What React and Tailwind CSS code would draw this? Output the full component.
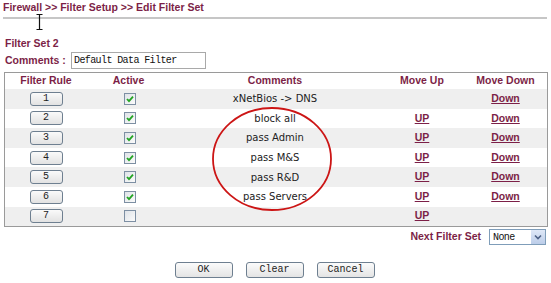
import React from "react";

const maroon = "text-[#7c1f47]";

function RuleBtn({ n }) {
  return (
    <div className="w-[33px] h-[14px] rounded-[3px] border border-[#6e7f90] bg-gradient-to-b from-[#fafafa] to-[#e2e2e2] flex items-center justify-center font-['Liberation_Mono'] text-[10px] text-[#222] leading-none">
      {n}
    </div>
  );
}

function Check({ on }) {
  return (
    <div className="w-[12px] h-[12px] border border-[#7d8fa3] bg-gradient-to-br from-[#dfe3e8] to-[#fbfbfb] flex items-center justify-center">
      {on && (
        <svg width="8" height="8" viewBox="0 0 8 8">
          <path d="M1 4 L3 6.2 L7 1.6" fill="none" stroke="#23a423" strokeWidth="1.8" />
        </svg>
      )}
    </div>
  );
}

function PageBtn({ children }) {
  return (
    <div className="w-[58px] h-[16px] rounded-[3px] border border-[#6e7f90] bg-gradient-to-b from-[#fbfbfb] to-[#e4e4e4] flex items-center justify-center font-['Liberation_Mono'] text-[10px] text-[#222] leading-none">
      {children}
    </div>
  );
}

const rows = [
  { n: 1, on: true, c: "xNetBios -> DNS", up: false, down: true },
  { n: 2, on: true, c: "block all", up: true, down: true },
  { n: 3, on: true, c: "pass Admin", up: true, down: true },
  { n: 4, on: true, c: "pass M&S", up: true, down: true },
  { n: 5, on: true, c: "pass R&D", up: true, down: true },
  { n: 6, on: true, c: "pass Servers", up: true, down: true },
  { n: 7, on: false, c: "", up: true, down: false },
];

export default function App() {
  return (
    <div className="relative w-[551px] h-[283px] bg-white overflow-hidden font-['Liberation_Sans',sans-serif]">
      {/* Title */}
      <div className={`pl-[3px] pt-[1px] h-[13px] leading-[13px] text-[10.5px] font-bold ${maroon}`}>
        Firewall &gt;&gt; Filter Setup &gt;&gt; Edit Filter Set
      </div>
      <div className="ml-[3px] mt-[4px] w-[544px] h-[2px] bg-[#c6c6c6]" />

      {/* Filter Set */}
      <div className={`pl-[5px] mt-[18px] h-[13px] leading-[13px] text-[10.5px] font-bold ${maroon}`}>
        Filter Set 2
      </div>
      <div className="flex items-center mt-[2px] h-[17px]">
        <div className={`pl-[5px] w-[71px] text-[10.5px] font-bold ${maroon}`}>Comments :</div>
        <div className="w-[135px] h-[17px] border border-[#a9a9a9] flex items-center pl-[2px] font-['Liberation_Mono'] text-[10px] tracking-[-0.6px] text-[#111]">
          Default Data Filter
        </div>
      </div>

      {/* Table */}
      <div className="ml-[4px] mt-[3px] w-[544px] border border-[#9a9a9a]">
        <div className={`grid grid-cols-[82px_83px_210px_84px_1fr] h-[16px] items-center text-[10.5px] font-bold ${maroon} text-center`}>
          <div>Filter Rule</div>
          <div>Active</div>
          <div>Comments</div>
          <div>Move Up</div>
          <div>Move Down</div>
        </div>
        {rows.map((r, i) => (
          <div
            key={r.n}
            className={`grid grid-cols-[82px_83px_210px_84px_1fr] h-[19.6px] items-center ${i % 2 === 0 ? "bg-[#efefef]" : "bg-white"}`}
          >
            <div className="flex justify-center">
              <RuleBtn n={r.n} />
            </div>
            <div className="flex justify-center pl-[2px]">
              <Check on={r.on} />
            </div>
            <div className="text-center font-['DejaVu_Sans'] text-[10px] text-[#222]">{r.c}</div>
            <div className={`text-center text-[10.5px] font-bold underline ${maroon}`}>{r.up ? "UP" : ""}</div>
            <div className={`text-center text-[10.5px] font-bold underline ${maroon}`}>{r.down ? "Down" : ""}</div>
          </div>
        ))}
      </div>

      {/* Next filter set */}
      <div className="flex justify-end items-center mt-[2px] w-[546px] h-[16px]">
        <div className={`text-[10.5px] font-bold ${maroon} mr-[8px]`}>Next Filter Set</div>
        <div className="w-[57px] h-[16px] border border-[#7f9db9] flex items-center bg-white">
          <div className="flex-1 pl-[3px] font-['Liberation_Mono'] text-[10px] tracking-[-0.6px] text-[#111]">None</div>
          <div className="w-[14px] h-[14px] bg-gradient-to-b from-[#dfe8f7] to-[#bccde9] flex items-center justify-center">
            <svg width="8" height="6" viewBox="0 0 8 6">
              <path d="M1 1.5 L4 4.5 L7 1.5" fill="none" stroke="#4d6185" strokeWidth="1.6" />
            </svg>
          </div>
        </div>
      </div>

      {/* Buttons */}
      <div className="flex justify-center gap-[13px] mt-[17px] pr-[2px]">
        <PageBtn>OK</PageBtn>
        <PageBtn>Clear</PageBtn>
        <PageBtn>Cancel</PageBtn>
      </div>

      {/* Red ellipse annotation */}
      <svg className="absolute left-[211px] top-[106px]" width="124" height="108" viewBox="0 0 124 108">
        <ellipse cx="61" cy="53" rx="59" ry="51" fill="none" stroke="#cc1515" strokeWidth="1.8" />
      </svg>

      {/* I-beam cursor */}
      <svg className="absolute left-[35px] top-[13px]" width="9" height="18" viewBox="0 0 9 18">
        <path d="M1.5 1.5 H7.5 M4.5 1.5 V16.5 M1.5 16.5 H7.5" fill="none" stroke="#111" strokeWidth="1.2" />
      </svg>
    </div>
  );
}
